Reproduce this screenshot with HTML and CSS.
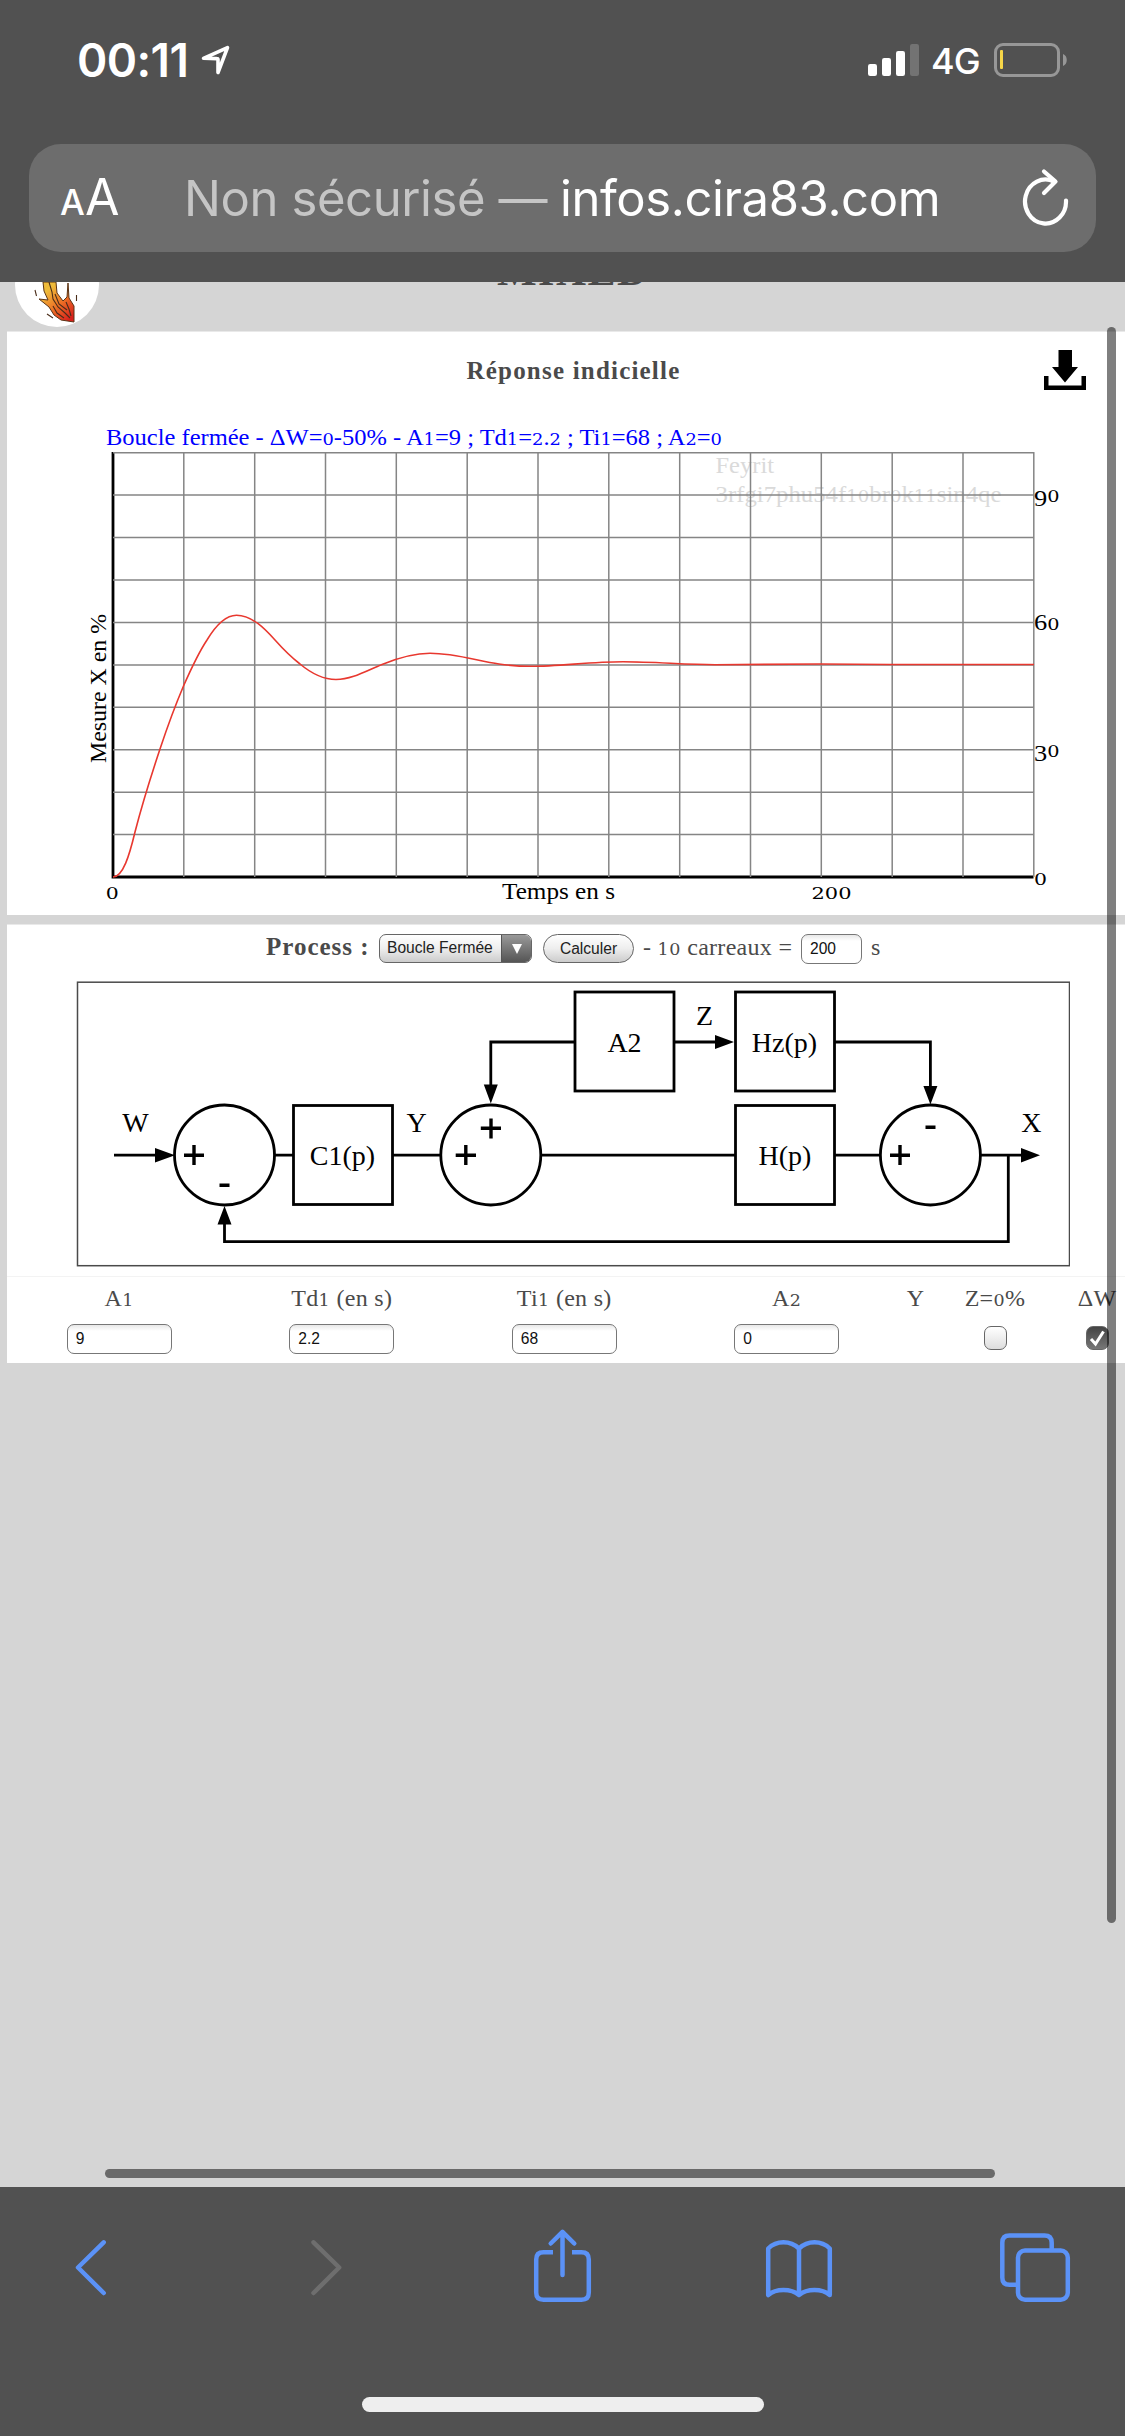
FILE: index.html
```html
<!DOCTYPE html>
<html lang="fr">
<head>
<meta charset="utf-8">
<title>Réponse indicielle</title>
<link rel="stylesheet" href="styles.css">
</head>
<body>
<header class="browser-top">
  <div class="status">
    <span class="clock">00:11</span>
    <svg class="loc" width="32" height="34" viewBox="0 0 32 34"><path d="M3.5 15.3 27.5 4.7 18 29.5V16.8Q18 15.6 16.8 15.6Z" fill="none" stroke="#fff" stroke-width="3.6" stroke-linejoin="round"/></svg>
    <svg class="signal" width="52" height="34" viewBox="0 0 52 34"><g fill="#fff"><rect x="0" y="21" width="9" height="12" rx="2.2"/><rect x="14" y="15" width="9" height="18" rx="2.2"/><rect x="28" y="8" width="9" height="25" rx="2.2"/><rect x="42" y="1" width="9" height="32" rx="2.2" opacity=".2"/></g></svg>
    <span class="net">4G</span>
    <svg class="battery" width="74" height="34" viewBox="0 0 74 34"><rect x="1.5" y="1.5" width="63" height="31" rx="7.5" fill="none" stroke="#979797" stroke-width="3"/><path d="M69 11v12c5-1.500 5-10.500 0-12z" fill="#979797"/><rect x="6" y="7" width="3" height="19" rx="1" fill="#f7d648"/></svg>
  </div>
  <div class="urlbar">
    <div class="aa"><span class="a-small">A</span><span class="a-big">A</span></div>
    <div class="url"><span class="insecure">Non sécurisé —</span><span class="host">infos.cira83.com</span></div>
    <svg class="reload" width="48" height="60" viewBox="0 0 48 60"><g fill="none" stroke="#fff" stroke-width="4.200" stroke-linecap="round" stroke-linejoin="round"><path d="M44 32.500A20.500 22 0 1 1 32 13.500"/><path d="M22 3.500 33.500 13.500 22 25"/></g></svg>
  </div>
</header>

<main class="page">
  <div class="banner">
    <svg class="logo" width="84" height="46" viewBox="0 0 84 46">
      <defs><linearGradient id="flame" x1="0" y1="0" x2=".8" y2="1"><stop offset=".25" stop-color="#eebb3a"/><stop offset=".6" stop-color="#ee7426"/><stop offset="1" stop-color="#d8201c"/></linearGradient></defs>
      <circle cx="42" cy="3" r="42" fill="#fff"/>
      <path d="M28 0 29 9 33 18 24 17 34 25 39 33 46 38 59 40 59 24 54 16 53 1 52 15 48 19 42 11 41 0Z" fill="url(#flame)" stroke="#5a3416" stroke-width="1"/>
      <path d="M34 0 37 10 38 17 43 25 50 31 55 36M40 12 44 22 52 28M38 24 42 31 49 36M51 20 54 27 56 34M20 8 21.500 14M61.500 13V19M32 32 38 36" fill="none" stroke="#4a2d1a" stroke-width="1.100"/>
    </svg>
    <h1 class="brand">MIXED</h1>
  </div>

  <section class="panel chart-panel">
    <div class="panel-head">
      <h2 class="panel-title">Réponse indicielle</h2>
      <svg class="download" width="42" height="40" viewBox="0 0 42 40"><path d="M14.500 0H28V17H34L21 32.500 8 17H14.500ZM0 26H4.500V35.500H37.500V26H42V40H0Z"/></svg>
    </div>
    <svg class="chart" width="1118" height="500" viewBox="7 415 1118 500">
      <g class="label">
        <text x="106" y="445" class="legend" textLength="616" lengthAdjust="spacingAndGlyphs">Boucle fermée - ΔW=<tspan class="low">0</tspan>-50% - A<tspan class="low">1</tspan>=9 ; Td<tspan class="low">1</tspan>=<tspan class="low">2</tspan>.<tspan class="low">2</tspan> ; Ti<tspan class="low">1</tspan>=68 ; A<tspan class="low">2</tspan>=<tspan class="low">0</tspan></text>
        <g class="mark">
          <text x="715.500" y="473" textLength="58.500" lengthAdjust="spacingAndGlyphs">Feyrit</text>
          <text x="715.500" y="502" textLength="286" lengthAdjust="spacingAndGlyphs">3rfgi7phu54f<tspan class="low">10</tspan>br<tspan class="low">0</tspan>k<tspan class="low">11</tspan>sin4qe</text>
        </g>
      </g>
      <path class="axis" d="M113 452V878.400M111.600 877H1033.500"/>
      <path class="grid" d="M183.800 452.700V877M254.700 452.700V877M325.500 452.700V877M396.300 452.700V877M467.200 452.700V877M538 452.700V877M608.800 452.700V877M679.700 452.700V877M750.500 452.700V877M821.300 452.700V877M892.200 452.700V877M963 452.700V877M1033.800 452.700V877M113 452.700H1034.500M113 495.100H1034M113 537.600H1034M113 580H1034M113 622.400H1034M113 664.900H1034M113 707.300H1034M113 749.700H1034M113 792.200H1034M113 834.600H1034"/>
      <path class="curve" d="M113 877C123 877 129.500 855 135 832C143 801 151 776 160 749C167 728 175 706 183.500 686C191 669 199 652 207 640C216 625 226 615.200 236.500 615.200C252 615.200 265 629 275 640C283 649 291 657 300 664C312 674 323 679.500 336 679.500C352 679.500 366 671 382 664.500C398 658 413 653.300 430 653.300C455 653.300 478 661 499 664C510 665.600 520 666.300 531 666.300C560 666.300 590 661.700 623 661.700C655 661.700 685 664.700 715 664.700L820 664 890 664.500H1034"/>
      <g class="label">
        <text x="1034" y="506" textLength="25.500" lengthAdjust="spacingAndGlyphs">9<tspan class="low" dy="-4">0</tspan></text>
        <text x="1034" y="629.500" textLength="25.500" lengthAdjust="spacingAndGlyphs">6<tspan class="low">0</tspan></text>
        <text x="1034" y="760.500" textLength="25.500" lengthAdjust="spacingAndGlyphs">3<tspan class="low" dy="-4">0</tspan></text>
        <text x="1034" y="884.500" class="low" textLength="13" lengthAdjust="spacingAndGlyphs">0</text>
        <text x="105.800" y="898.500" class="low" textLength="13" lengthAdjust="spacingAndGlyphs">0</text>
        <text x="502" y="898.500" textLength="113" lengthAdjust="spacingAndGlyphs">Temps en s</text>
        <text x="811.500" y="898.500" class="low" textLength="40" lengthAdjust="spacingAndGlyphs">200</text>
        <text transform="translate(106 763) rotate(-90)" textLength="149" lengthAdjust="spacingAndGlyphs">Mesure X en %</text>
      </g>
    </svg>
  </section>

  <section class="panel process-panel">
    <div class="process-row">
      <span class="process-label">Process :</span>
      <div class="select"><span class="select-text">Boucle Fermée</span><span class="select-arrow"><svg width="10" height="10" viewBox="0 0 10 10"><path d="M0 0H10L5 10Z" fill="#fff"/></svg></span></div>
      <button class="calc" type="button">Calculer</button>
      <span class="tiles">- <span class="low-text">10</span> carreaux =</span>
      <div class="field field-short">200</div>
      <span class="unit">s</span>
    </div>
    <svg class="diagram" width="994" height="286" viewBox="76 981 994 286">
      <rect x="77.500" y="982.200" width="992" height="283.500" fill="#fff" stroke="#4a4a4a" stroke-width="1.500"/>
      <g fill="none" stroke="#000" stroke-width="2.800">
        <circle cx="224.500" cy="1155" r="50"/><circle cx="490.800" cy="1155" r="50"/><circle cx="930.400" cy="1155" r="50"/>
        <rect x="293.500" y="1105.500" width="99" height="99"/>
        <rect x="735.500" y="1105.500" width="99" height="99"/>
        <rect x="735.500" y="992" width="99" height="99"/>
        <rect x="575" y="992" width="99" height="99"/>
        <path d="M114 1155.200H158M274 1155.200H294M393 1155.200H441M541 1155.200H735M835 1155.200H881M980 1155.200H1024M1008.300 1155V1241.700H224.500V1220M575 1042H490.800V1088M674 1042H718M835 1042H930.400V1090"/>
      </g>
      <path d="M155 1148 175 1155.200 155 1162.400ZM1021 1148 1040 1155.200 1021 1162.400ZM715 1035 734 1042 715 1049ZM217.500 1224.500 224.500 1206 231.500 1224.500ZM483.800 1084.500 490.800 1103.500 497.800 1084.500ZM923.400 1086 930.400 1104.500 937.400 1086Z"/>
      <path d="M184 1155.200H204M194 1145V1165M480.800 1128.200H501M491 1118.500V1138.500M455.700 1155.200H476M465.800 1145V1165M890 1155.200H910M900 1145V1165M219.500 1185.200H229.500M925.500 1127.200H935.500" stroke="#000" stroke-width="3.400"/>
      <g class="node-text" text-anchor="middle">
        <text x="135.500" y="1131.500">W</text><text x="416.500" y="1131.500">Y</text><text x="704.500" y="1025">Z</text><text x="1031.300" y="1131.500">X</text>
        <text x="342.500" y="1164.500">C1(p)</text><text x="785" y="1164.500">H(p)</text><text x="784.500" y="1051.500">Hz(p)</text><text x="624.500" y="1051.500">A2</text>
      </g>
    </svg>
  </section>

  <section class="params">
    <div class="param"><span class="param-name">A<span class="low-text">1</span></span><div class="field">9</div></div>
    <div class="param"><span class="param-name">Td<span class="low-text">1</span> (en s)</span><div class="field">2.2</div></div>
    <div class="param"><span class="param-name">Ti<span class="low-text">1</span> (en s)</span><div class="field">68</div></div>
    <div class="param"><span class="param-name">A<span class="low-text">2</span></span><div class="field">0</div></div>
    <div class="param param-y"><span class="param-name">Y</span></div>
    <div class="param param-z"><span class="param-name">Z=<span class="low-text">0</span>%</span><span class="check"></span></div>
    <div class="param param-w"><span class="param-name">ΔW</span><span class="check checked"><svg width="20" height="22" viewBox="0 0 20 22"><path d="M4 12 8.500 17 16.500 4.500" fill="none" stroke="#fff" stroke-width="3"/></svg></span></div>
  </section>

  <div class="scroll-v"></div>
  <div class="scroll-h"></div>
</main>

<footer class="toolbar">
  <svg class="tools" width="1125" height="130" viewBox="0 2187 1125 130">
    <g fill="none" stroke="#5b92f7" stroke-width="4.500" stroke-linecap="round" stroke-linejoin="round">
      <path d="M103.700 2242.300 78 2267.500 103.700 2293"/>
      <path d="M313.500 2242.300 339.200 2267.500 313.500 2293" stroke="#6e6e6e"/>
      <path d="M553 2252.300H543.500Q536.200 2252.300 536.200 2259.500V2292.500Q536.200 2299.700 543.500 2299.700H581.500Q588.800 2299.700 588.800 2292.500V2259.500Q588.800 2252.300 581.500 2252.300H572" stroke-linecap="butt"/>
      <path d="M562.500 2275V2233M550.700 2243.500 562.500 2231.800 574.300 2243.500"/>
      <path d="M768.200 2295V2248.500Q774.500 2242.300 783.500 2242.300T799 2248.500Q805.500 2242.300 814.500 2242.300T829.800 2248.500V2295Q824 2290 814.500 2290T799 2295Q793 2290 783.500 2290T768.200 2295ZM799 2248.500V2294"/>
      <path d="M1017 2284.800H1009.500Q1002.300 2284.800 1002.300 2277.500V2242.700Q1002.300 2235.500 1009.500 2235.500H1044.500Q1051.700 2235.500 1051.700 2242.700V2249" stroke-linecap="butt"/>
      <rect x="1018" y="2250.500" width="49.800" height="49.200" rx="7"/>
    </g>
  </svg>
  <div class="home"></div>
</footer>
</body>
</html>
```
FILE: styles.css
```css
* { box-sizing: border-box; }
body { margin: 0; width: 1125px; height: 2436px; display: flex; flex-direction: column; overflow: hidden; background: #d5d5d5; }

.browser-top { height: 282px; flex: none; background: #515151; color: #fff; font-family: Inter, sans-serif; }
.status { height: 144px; padding: 43px 57px 0 77px; display: flex; align-items: flex-start; }
.clock { font-size: 46px; font-weight: 600; line-height: 35px; width: 111px; letter-spacing: -.6px; white-space: nowrap; }
.loc { margin: 0 auto 0 12px; }
.net { font-size: 36px; font-weight: 500; line-height: 37px; width: 51px; margin: 0 12px 0 11px; letter-spacing: -1px; }
.urlbar { height: 108px; margin: 0 29px; border-radius: 32px; background: #6d6d6d; display: flex; align-items: center; }
.aa { width: 155px; padding-left: 31px; margin-top: 2px; display: flex; align-items: baseline; line-height: 60px; }
.a-small { font-size: 35px; font-weight: 500; width: 25px; }
.a-big { font-size: 50px; font-weight: 400; }
.url { display: flex; flex: 1; font-size: 49px; line-height: 60px; white-space: nowrap; letter-spacing: -.4px; padding-top: 2px; }
.insecure { width: 376px; color: #c5c5c5; }
.reload { margin-right: 26px; }

.page { position: relative; height: 1905px; flex: none; overflow: hidden; font-family: "Liberation Serif", serif; color: #4a4a4a; }
.banner { height: 49px; padding-left: 15px; display: flex; align-items: flex-start; }
.brand { margin: -32px 0 0 398px; font-size: 42px; line-height: 42px; width: 170px; letter-spacing: 1.4px; }
.panel { margin-left: 6.5px; background: #fff; border-top: 1px solid #e9e9e9; }
.chart-panel { height: 584px; margin-bottom: 9px; }
.panel-head { height: 83px; display: flex; justify-content: space-between; padding: 18px 39px 0 460px; }
.panel-title { margin: 7px 0 0; font-size: 25px; line-height: 28px; letter-spacing: 1.2px; }
.chart { display: block; margin-left: .5px; }
.label { font-size: 24px; fill: #000; }
.low { font: 17.5px "DejaVu Serif", serif; }
.legend { fill: #00f; }
.mark { fill: #dadada; }
.grid { stroke: #858585; stroke-width: 1.5; fill: none; }
.axis { stroke: #000; stroke-width: 2.8; fill: none; }
.curve { stroke: #e8382f; stroke-width: 1.6; fill: none; }

.process-panel { height: 352px; }
.process-row { height: 56px; padding: 9px 0 0 259.5px; display: flex; align-items: flex-start; font-size: 24px; line-height: 26px; white-space: nowrap; }
.process-label { width: 113px; font-size: 25px; font-weight: bold; letter-spacing: 1px; }
.select, .calc { height: 29px; border: 1.5px solid #666; font: 15.6px/26px "Liberation Sans", sans-serif; color: #222; background: linear-gradient(#fff, #eee 50%, #ccc); }
.select { width: 153px; border-radius: 7px; display: flex; overflow: hidden; margin-right: 11px; }
.select-text { width: 121px; padding-left: 7px; }
.select-arrow { flex: 1; display: flex; align-items: center; justify-content: center; background: linear-gradient(#999, #555); border-left: 1px solid #555; }
.calc { width: 91px; padding: 0; border-radius: 15px; text-align: center; margin-right: 9px; }
.tiles { width: 158px; letter-spacing: .3px; }
.low-text { font: 17.5px/1 "DejaVu Serif", serif; letter-spacing: .5px; }
.field { width: 105px; height: 30px; border: 1.5px solid #777; border-radius: 7px; background: linear-gradient(#e8e8e8, #fff 6px); font: 15.6px/27px "Liberation Sans", sans-serif; color: #111; padding-left: 8px; }
.field-short { width: 61px; margin-right: 9px; }
.diagram { display: block; margin-left: 69.5px; }
.node-text { font-size: 28px; fill: #000; }

.params { height: 87px; margin-left: 6.5px; background: #fff; border-top: 1px solid #f3f3f3; display: flex; font-size: 24px; padding-left: 1.5px; }
.param { width: 222.500px; flex: none; display: flex; flex-direction: column; align-items: center; padding-top: 7px; white-space: nowrap; }
.param-name { height: 40px; line-height: 28px; letter-spacing: .3px; }
.param-y { width: 35px; }
.param-z { width: 124px; }
.param-w { width: 80px; }
.check { width: 23px; height: 24px; margin-top: 2px; border: 1.5px solid #666; border-radius: 7px; background: linear-gradient(#fff, #ddd); }
.checked { background: linear-gradient(#444, #777); display: flex; }
.scroll-v { position: absolute; left: 1107px; top: 45px; width: 9px; height: 1596px; border-radius: 5px; background: rgba(0, 0, 0, .5); }
.scroll-h { position: absolute; left: 105px; top: 1887px; width: 890px; height: 9px; border-radius: 5px; background: #6a6a6a; }

.toolbar { height: 249px; flex: none; background: #515151; display: flex; flex-direction: column; align-items: center; }
.tools { display: block; }
.home { width: 402px; height: 15px; margin-top: 80px; border-radius: 8px; background: #eee; }
```
